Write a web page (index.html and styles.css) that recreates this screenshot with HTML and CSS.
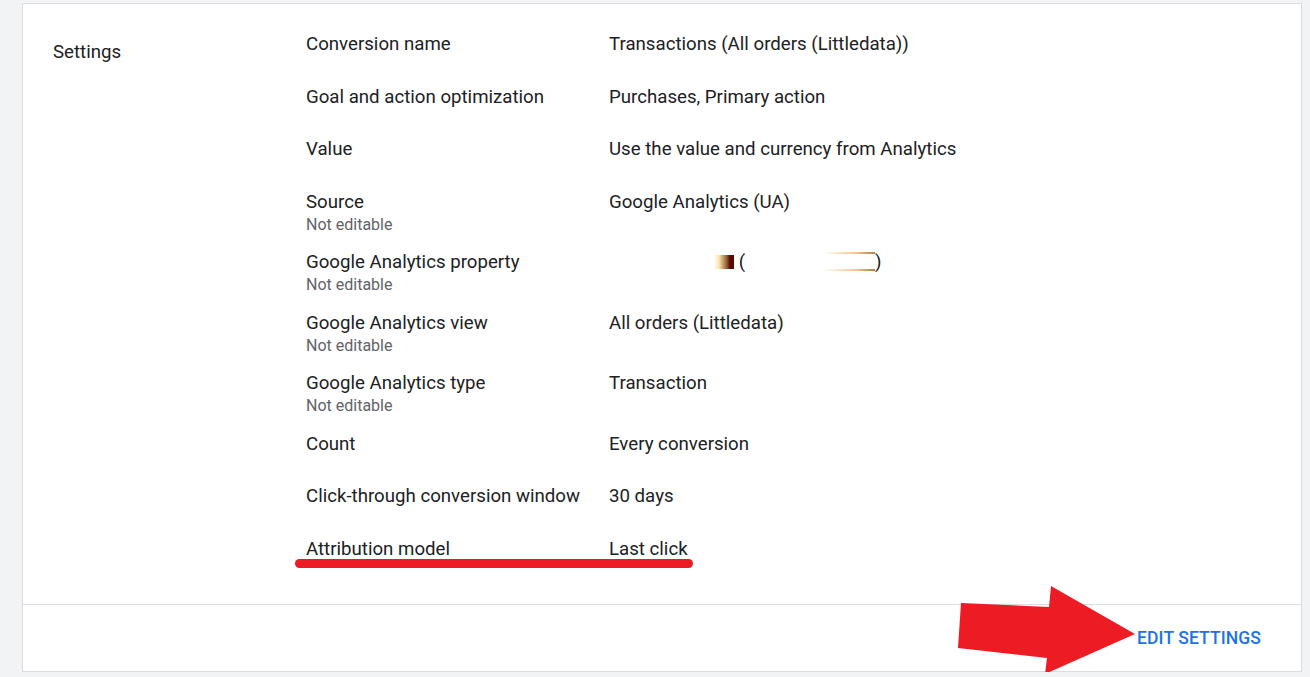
FILE: index.html
```html
<!DOCTYPE html>
<html>
<head>
<meta charset="utf-8">
<link rel="stylesheet" href="styles.css">
</head>
<body>
<div class="card">
  <div class="card-body">
    <div class="section-title">Settings</div>
    <div class="rows">
      <div class="row"><div class="label">Conversion name</div><div class="value">Transactions (All orders (Littledata))</div></div>
      <div class="row"><div class="label">Goal and action optimization</div><div class="value">Purchases, Primary action</div></div>
      <div class="row"><div class="label">Value</div><div class="value">Use the value and currency from Analytics</div></div>
      <div class="row"><div class="label">Source<div class="sub">Not editable</div></div><div class="value">Google Analytics (UA)</div></div>
      <div class="row"><div class="label">Google Analytics property<div class="sub">Not editable</div></div><div class="value"><span class="blur-a"></span><span class="blur-b"></span> (<span class="blur-c"></span>)</div></div>
      <div class="row"><div class="label">Google Analytics view<div class="sub">Not editable</div></div><div class="value">All orders (Littledata)</div></div>
      <div class="row"><div class="label">Google Analytics type<div class="sub">Not editable</div></div><div class="value">Transaction</div></div>
      <div class="row"><div class="label">Count</div><div class="value">Every conversion</div></div>
      <div class="row"><div class="label">Click-through conversion window</div><div class="value">30 days</div></div>
      <div class="row"><div class="label">Attribution model</div><div class="value">Last click</div></div>
    </div>
  </div>
  <div class="card-footer">
    <span class="edit">EDIT SETTINGS</span>
  </div>
  <div class="underline"></div>
  <svg class="arrow" width="190" height="100" viewBox="0 0 190 100">
    <polygon points="3,19 91,23 93,2 177,50 87,90 89,74 0,64" fill="#ed1c24"/>
  </svg>
</div>
</body>
</html>
```

FILE: styles.css
```css
html, body {
  margin: 0;
  background: #f1f3f4;
}
body {
  padding: 3px 8px 0 22px;
  font-family: Roboto, "Liberation Sans", Arial, sans-serif;
  color: #202124;
  overflow: hidden;
}
.card {
  position: relative;
  width: 1278px;
  background: #fff;
  border: 1px solid #dadce0;
}
.card-body {
  display: flex;
  padding: 20px 0 23px 30px;
}
.section-title {
  width: 253px;
  font-size: 18.67px;
  line-height: 24px;
  padding-top: 16px;
}
.rows {
  display: flex;
  flex-direction: column;
}
.row {
  display: flex;
  padding: 8px 0;
  min-height: 36.5px;
}
.label {
  width: 303px;
  font-size: 18.67px;
  line-height: 24px;
}
.sub {
  font-size: 16px;
  line-height: 19.5px;
  color: #5f6368;
  margin-top: 1px;
}
.value {
  font-size: 18.67px;
  line-height: 24px;
  height: 24px;
}
.blur-a {
  display: inline-block;
  width: 105px;
}
.blur-b {
  display: inline-block;
  vertical-align: -1px;
  width: 20px;
  height: 14px;
  background: linear-gradient(to right, #fff 0%, #ffe3b0 25%, #8a5a30 65%, #5a0a00 80%);
}
.blur-c {
  display: inline-block;
  vertical-align: -3px;
  width: 130px;
  height: 19px;
  box-sizing: border-box;
  border-top: 2px solid transparent;
  border-bottom: 2px solid transparent;
  border-image: linear-gradient(to right, #fff 0%, #fff 60%, #f2c690 85%, #b07a40 100%) 1;
}
.card-footer {
  border-top: 1px solid #dadce0;
  height: 66px;
  display: flex;
  align-items: center;
  justify-content: flex-end;
  padding-right: 40px;
}
.edit {
  color: #1a73e8;
  font-size: 17.5px;
  font-weight: 500;
  letter-spacing: 0.1px;
}
.underline {
  position: absolute;
  left: 272px;
  top: 555px;
  width: 398px;
  height: 9px;
  border-radius: 4.5px;
  background: #ed1c24;
}
.arrow {
  position: absolute;
  left: 935px;
  top: 580px;
  overflow: visible;
}
```
